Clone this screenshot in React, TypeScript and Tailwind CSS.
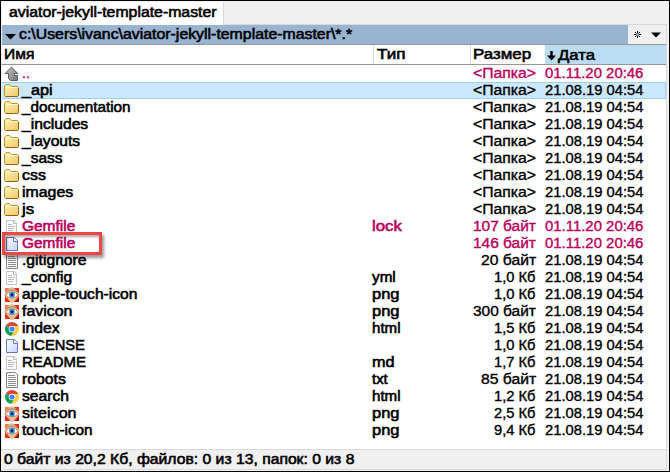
import { useLayoutEffect, useRef, useState } from "react";

/* Text stretched horizontally so the line takes the given width. */
function Fit({ text, w, light = false }: { text: string; w: number; light?: boolean }) {
  const ref = useRef<HTMLSpanElement>(null);
  const [scale, setScale] = useState(1);
  useLayoutEffect(() => {
    const el = ref.current;
    if (el) setScale(w / el.offsetWidth);
  }, [text, w]);
  return (
    <span className="block h-[17px]" style={{ width: w }}>
      <span
        ref={ref}
        style={{ transform: `scaleX(${scale})` }}
        className={
          light
            ? "inline-block origin-left whitespace-pre [-webkit-text-stroke:0.35px_currentColor]"
            : "inline-block origin-left whitespace-pre [-webkit-text-stroke:0.55px_currentColor]"
        }
      >
        {text}
      </span>
    </span>
  );
}

type Kind = "up" | "folder" | "doc" | "blank" | "text" | "image" | "chrome";

function Icon({ kind }: { kind: Kind }) {
  const c = "block h-4 w-4 shrink-0";
  if (kind === "up")
    return (
      <svg viewBox="0 0 16 16" className={c}>
        <defs>
          <linearGradient id="up" x1="0" y1="0" x2="1" y2="1">
            <stop offset="0" stopColor="#c9c9c9" />
            <stop offset="1" stopColor="#757575" />
          </linearGradient>
        </defs>
        <path d="M7.5 1 13.8 7.5H10.5V9.5H13.5V14.5H6.5L4.5 12.5V7.5H1.2Z" fill="url(#up)" stroke="#5c5c5c" />
      </svg>
    );
  if (kind === "folder")
    return (
      <svg viewBox="0 0 16 16" className={c}>
        <defs>
          <linearGradient id="fold" x1="0" y1="0" x2="1" y2="1">
            <stop offset="0" stopColor="#fff2b5" />
            <stop offset="1" stopColor="#f0c868" />
          </linearGradient>
        </defs>
        <path d="M.5 12.5V3L2.5 1.5H5.5L7.5 3.5H13.5L14.5 4.5V12.5L13.5 13.5H1.5Z" fill="url(#fold)" stroke="#c0912c" />
        <path d="M1.5 4.5H13.5" stroke="#fff6ce" />
        <path d="M1.5 13.5H13.5L14.5 12.5V5" fill="none" stroke="#93630d" />
      </svg>
    );
  if (kind === "blank")
    return (
      <svg viewBox="0 0 16 16" className={c}>
        <defs>
          <linearGradient id="blank" x1="0" y1="0" x2="1" y2="1">
            <stop offset="0" stopColor="#ffffff" />
            <stop offset="1" stopColor="#c6d2fa" />
          </linearGradient>
        </defs>
        <path d="M2.5 1.5H10.5L13.5 4.5V14.5H2.5Z" fill="url(#blank)" stroke="#6775b5" />
        <path d="M9.5 1.5V5.5H13.5" fill="#eef2ff" stroke="#6775b5" />
      </svg>
    );
  if (kind === "doc")
    return (
      <svg viewBox="0 0 16 16" className={c}>
        <path d="M2.5 1.5H10.5L12.5 3.5V14.5H2.5Z" fill="#f9f9f9" stroke="#c2c2c2" />
        <path d="M9.5 1.5V4.5H12.5" fill="none" stroke="#bababa" />
        <path d="M4 5.5H8M4 7.5H11M4 9.5H10M4 11.5H9" stroke="#bcbcbc" />
      </svg>
    );
  if (kind === "text")
    return (
      <svg viewBox="0 0 16 16" className={c}>
        <path d="M2.5 .5H11.5L13.5 2.5V15.5H2.5Z" fill="#f8f8f8" stroke="#858585" />
        <path d="M4 3.5H11M4 5.5H12M4 7.5H12M4 9.5H12M4 11.5H12M4 13.5H12" stroke="#909090" />
      </svg>
    );
  if (kind === "chrome")
    return (
      <svg viewBox="0 0 16 16" className={c}>
        <path d="M8 8 1.94 4.5A7 7 0 0 1 14.06 4.5L14.4 5H8Z" fill="#db4437" />
        <path d="M8 8 1.94 4.5A7 7 0 0 0 7.3 14.96L10.6 9.5Z" fill="#0f9d58" />
        <path d="M8 5H14.3A7 7 0 0 1 7.3 14.96L10.6 9.5Z" fill="#ffcd40" />
        <circle cx="8" cy="8" r="3.3" fill="#fff" />
        <circle cx="8" cy="8" r="2.6" fill="#4285f4" />
      </svg>
    );
  return (
    <svg viewBox="0 0 16 16" className={c}>
      <path d="M1 1H15V15H1Z" fill="#ee2d14" />
      <path d="M1 1H9L1 9Z" fill="#ff7850" />
      <path d="M15 11V15H11Z" fill="#8e1705" />
      <path d="M8 0 11 2 16 7.5 13 11 9 16H7L4 12 0 8 3 4 5 1Z" fill="#e6c09a" />
      <path d="M2.5 5Q8 .5 13.5 5" fill="none" stroke="#9a6d4c" strokeWidth=".8" />
      <path d="M1.5 8Q8 1.5 14.5 8 8 13.5 1.5 8Z" fill="#fff" stroke="#a57757" strokeWidth=".7" />
      <circle cx="8" cy="7.8" r="2.8" fill="#2687dc" />
      <circle cx="8" cy="7.8" r="1.3" fill="#061a44" />
    </svg>
  );
}

type Row = { icon: Kind; name: string; w: number; ext?: string; ew?: number; size: string; sw: number; recent?: boolean };

const rows: Row[] = [
  { icon: "up", name: "..", w: 8, size: "<Папка>", sw: 63, recent: true },
  { icon: "folder", name: "_api", w: 30, size: "<Папка>", sw: 63 },
  { icon: "folder", name: "_documentation", w: 109, size: "<Папка>", sw: 63 },
  { icon: "folder", name: "_includes", w: 66, size: "<Папка>", sw: 63 },
  { icon: "folder", name: "_layouts", w: 58, size: "<Папка>", sw: 63 },
  { icon: "folder", name: "_sass", w: 41, size: "<Папка>", sw: 63 },
  { icon: "folder", name: "css", w: 24, size: "<Папка>", sw: 63 },
  { icon: "folder", name: "images", w: 51, size: "<Папка>", sw: 63 },
  { icon: "folder", name: "js", w: 12, size: "<Папка>", sw: 63 },
  { icon: "doc", name: "Gemfile", w: 53, ext: "lock", ew: 30, size: "107 байт", sw: 63, recent: true },
  { icon: "blank", name: "Gemfile", w: 53, size: "146 байт", sw: 63, recent: true },
  { icon: "text", name: ".gitignore", w: 65, size: "20 байт", sw: 55 },
  { icon: "doc", name: "_config", w: 50, ext: "yml", ew: 24, size: "1,0 Кб", sw: 42 },
  { icon: "image", name: "apple-touch-icon", w: 116, ext: "png", ew: 27, size: "1,0 Кб", sw: 42 },
  { icon: "image", name: "favicon", w: 50, ext: "png", ew: 27, size: "300 байт", sw: 63 },
  { icon: "chrome", name: "index", w: 37, ext: "html", ew: 28, size: "1,5 Кб", sw: 42 },
  { icon: "blank", name: "LICENSE", w: 63, size: "1,0 Кб", sw: 42 },
  { icon: "doc", name: "README", w: 64, ext: "md", ew: 22, size: "1,7 Кб", sw: 42 },
  { icon: "text", name: "robots", w: 44, ext: "txt", ew: 16, size: "85 байт", sw: 55 },
  { icon: "chrome", name: "search", w: 47, ext: "html", ew: 28, size: "1,2 Кб", sw: 42 },
  { icon: "image", name: "siteicon", w: 54, ext: "png", ew: 27, size: "2,5 Кб", sw: 42 },
  { icon: "image", name: "touch-icon", w: 71, ext: "png", ew: 27, size: "9,4 Кб", sw: 42 },
];

export default function App() {
  return (
    <div className="relative flex h-[472px] w-[670px] flex-col overflow-hidden border border-black bg-[#f0f0f0] pr-[2px] pl-px font-['Liberation_Sans',Arial,sans-serif] text-[14px] leading-[17px] text-black">
      <div className="flex h-6 shrink-0">
        <div className="mt-px w-[222px] border-r border-[#d9d9d9] bg-white pt-[2px] pl-[7px]">
          <Fit text="aviator-jekyll-template-master" w={208} />
        </div>
        <div className="flex-1 border-b border-[#d9d9d9]" />
      </div>
      <div className="flex h-[20px] shrink-0 border-r border-b border-r-[#d9d9d9] border-b-[#969696] bg-[#99b4d1]">
        <svg viewBox="0 0 17 19" className="h-[19px] w-[17px] shrink-0"><path d="M3 9H14L8.5 14.5Z" /></svg>
        <div className="flex-1 pt-px"><Fit text={"c:\\Users\\ivanc\\aviator-jekyll-template-master\\*.*"} w={333} /></div>
        <div className="flex w-[38px] items-center justify-between bg-[#f0f0f0] pr-[5px] pl-[6px]">
          <svg viewBox="0 0 7 7" className="h-[7px] w-[7px]"><path d="M3.5 0V2.5M3.5 4.5V7M0 3.5H2.5M4.5 3.5H7M1 1 2.5 2.5M4.5 4.5 6 6M6 1 4.5 2.5M2.5 4.5 1 6" stroke="#000" /></svg>
          <svg viewBox="0 0 10 6" className="h-[6px] w-[10px]"><path d="M0 .5H10L5 5.5Z" /></svg>
        </div>
      </div>
      <div className="flex h-[404px] shrink-0 flex-col border-r border-[#d9d9d9] bg-white">
        <div className="flex h-5 shrink-0 border-b border-[#969696] text-[14px]">
          <div className="w-[372px] border-r border-[#d9d9d9] pt-px pl-[2px]"><Fit text="Имя" w={30} /></div>
          <div className="w-[97px] border-r border-[#d9d9d9] pt-px pl-[3px]"><Fit text="Тип" w={28} /></div>
          <div className="w-[74px] pt-px pl-[2px]"><Fit text="Размер" w={58} /></div>
          <div className="flex flex-1 items-start bg-[#bcdcf4] pt-[2px] pl-[2px]">
            <svg viewBox="0 0 9 10" className="mt-[4px] mr-[2px] h-[10px] w-[9px]"><path d="M3.3 0H5.7V4.5H9L4.5 9.5 0 4.5H3.3Z" /></svg>
            <Fit text="Дата" w={37} />
          </div>
        </div>
        {rows.map((r, i) => (
          <div
            key={i}
            className={`flex h-[17px] shrink-0 items-center ${i === 1 ? "bg-[#cce8ff] shadow-[inset_0_1px_#99d1ff,inset_0_-1px_#99d1ff,inset_-1px_0_#99d1ff]" : ""} ${r.recent ? "text-[#b9005c]" : ""}`}
          >
            <div className="flex w-[370px] items-center pl-[2px]">
              <Icon kind={r.icon} />
              <div className="ml-[2px] h-[17px]"><Fit text={r.name} w={r.w} light={i === 0} /></div>
            </div>
            <div className="h-[17px] w-[80px]">{r.ext && <Fit text={r.ext} w={r.ew ?? 27} />}</div>
            <div className="flex h-[17px] w-[84px] justify-end"><Fit text={r.size} w={r.sw} light /></div>
            <div className="ml-[9px] h-[17px]"><Fit text={r.recent ? "01.11.20 20:46" : "21.08.19 04:54"} w={98} light /></div>
          </div>
        ))}
      </div>
      <div className="h-[21px] shrink-0 border-t border-r border-b border-[#d9d9d9] pt-px pl-[2px]">
        <Fit text="0 байт из 20,2 Кб, файлов: 0 из 13, папок: 0 из 8" w={350} />
      </div>
      <div className="absolute top-[231px] left-px h-[23px] w-[100px] border-[3px] border-[#f04545] shadow-[2px_3px_3px_rgba(0,0,0,0.4),inset_2px_2px_3px_rgba(0,0,0,0.35)]" />
    </div>
  );
}
